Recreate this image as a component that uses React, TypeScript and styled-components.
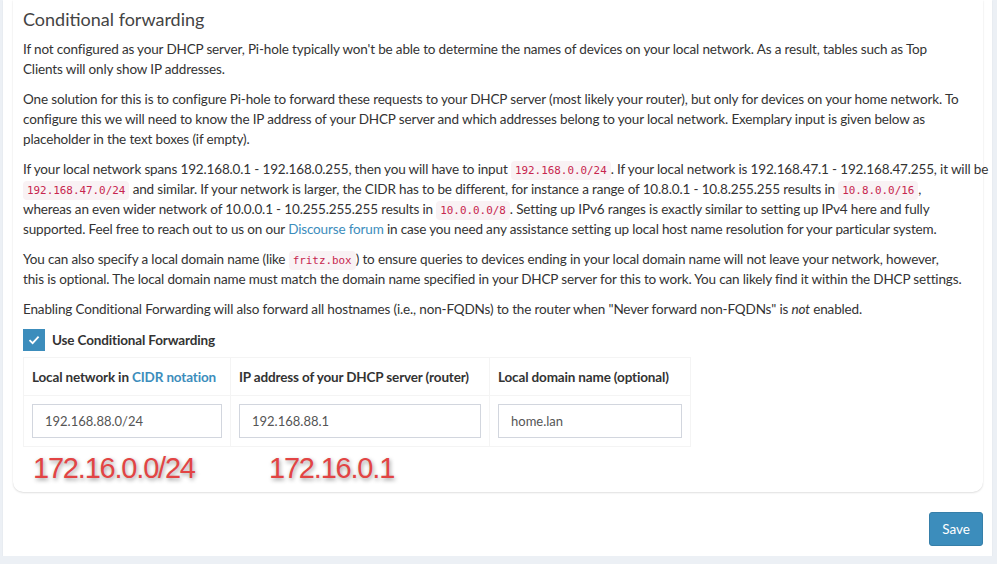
import React from "react";
import styled, { createGlobalStyle } from "styled-components";

const GlobalStyle = createGlobalStyle`
  html, body {
    margin: 0;
    padding: 0;
    background: #ecf0f5;
  }
  body {
    font-family: Lato, "Open Sans", sans-serif;
    font-size: 13.5px;
    letter-spacing: -0.15px;
    color: #333;
  }
`;

const Page = styled.div`
  width: 989px;
  margin-left: 3px;
  background: #fff;
  padding: 0 9px 10px 10px;
  box-sizing: border-box;
  box-shadow: 0 1px 1px rgba(0, 0, 0, 0.1);
`;

const Card = styled.div`
  background: #fff;
  border-radius: 0 0 10px 10px;
  box-shadow: 0 1px 2px rgba(0, 0, 0, 0.12), 0 0 1px rgba(0, 0, 0, 0.08);
  padding: 9px 10px 8px 10px;
`;

const Title = styled.h3`
  margin: 0 0 10px;
  font-size: 18px;
  font-weight: 400;
  line-height: 20px;
  color: #444;
  letter-spacing: 0;
`;

const Para = styled.p`
  margin: 0 0 10px;
  line-height: 20px;
  white-space: nowrap;
`;

const Code = styled.code`
  font-family: "DejaVu Sans Mono", "Liberation Mono", monospace;
  font-size: 10.9px;
  line-height: 1;
  letter-spacing: 0;
  color: #c7254e;
  background: #f9f2f4;
  padding: 3px 4px;
  border-radius: 4px;
`;

const Link = styled.a`
  color: #3c8dbc;
  text-decoration: none;
`;

const CheckRow = styled.label`
  display: flex;
  align-items: center;
  gap: 7px;
  font-weight: 700;
  margin: 0 0 6px;
`;

const Box = styled.span`
  width: 22px;
  height: 22px;
  background: #3c8dbc;
  display: flex;
  align-items: center;
  justify-content: center;
`;

const Table = styled.table`
  border-collapse: collapse;
  border: 1px solid #f4f4f4;
`;

const Th = styled.th<{ $w: number }>`
  width: ${(p) => p.$w}px;
  box-sizing: border-box;
  border: 1px solid #f4f4f4;
  padding: 8px 8px;
  height: 38px;
  text-align: left;
  font-size: 13.5px;
  font-weight: 700;
  white-space: nowrap;
`;

const Td = styled.td`
  border: 1px solid #f4f4f4;
  padding: 8px;
  height: 50px;
  box-sizing: border-box;
`;

const Input = styled.input`
  display: block;
  width: 100%;
  height: 34px;
  box-sizing: border-box;
  border: 1px solid #d2d6de;
  padding: 6px 12px;
  font-family: Lato, "Open Sans", sans-serif;
  font-size: 13px;
  color: #555;
  outline: none;
`;

const Notes = styled.div`
  display: flex;
  padding: 6px 0 0 10px;
  height: 31px;
`;

const Note = styled.span<{ $w: number }>`
  width: ${(p) => p.$w}px;
  font-family: "Liberation Sans", Arial, sans-serif;
  font-size: 29px;
  letter-spacing: -1.2px;
  line-height: 30px;
  color: #e24444;
  text-shadow: 1px 2px 4px rgba(0, 0, 0, 0.4);
`;

const Footer = styled.div`
  display: flex;
  justify-content: flex-end;
  padding-top: 20px;
`;

const SaveButton = styled.button`
  height: 34px;
  padding: 0 12px;
  background: #3c8dbc;
  border: 1px solid #367fa9;
  border-radius: 3px;
  color: #fff;
  font-family: Lato, "Open Sans", sans-serif;
  font-size: 13.5px;
`;

export default function App() {
  return (
    <>
      <GlobalStyle />
      <Page>
        <Card>
          <Title>Conditional forwarding</Title>
          <Para>
            If not configured as your DHCP server, Pi-hole typically won't be able to determine the names of devices on
            your local network. As a result, tables such as Top
            <br />
            Clients will only show IP addresses.
          </Para>
          <Para>
            One solution for this is to configure Pi-hole to forward these requests to your DHCP server (most likely your
            router), but only for devices on your home network. To
            <br />
            configure this we will need to know the IP address of your DHCP server and which addresses belong to your
            local network. Exemplary input is given below as
            <br />
            placeholder in the text boxes (if empty).
          </Para>
          <Para>
            If your local network spans 192.168.0.1 - 192.168.0.255, then you will have to input <Code>192.168.0.0/24</Code>.
            If your local network is 192.168.47.1 - 192.168.47.255, it will be
            <br />
            <Code>192.168.47.0/24</Code> and similar. If your network is larger, the CIDR has to be different, for
            instance a range of 10.8.0.1 - 10.8.255.255 results in <Code>10.8.0.0/16</Code>,
            <br />
            whereas an even wider network of 10.0.0.1 - 10.255.255.255 results in <Code>10.0.0.0/8</Code>. Setting up
            IPv6 ranges is exactly similar to setting up IPv4 here and fully
            <br />
            supported. Feel free to reach out to us on our <Link>Discourse forum</Link> in case you need any assistance
            setting up local host name resolution for your particular system.
          </Para>
          <Para>
            You can also specify a local domain name (like <Code>fritz.box</Code>) to ensure queries to devices ending
            in your local domain name will not leave your network, however,
            <br />
            this is optional. The local domain name must match the domain name specified in your DHCP server for this
            to work. You can likely find it within the DHCP settings.
          </Para>
          <Para>
            Enabling Conditional Forwarding will also forward all hostnames (i.e., non-FQDNs) to the router when "Never
            forward non-FQDNs" is <em>not</em> enabled.
          </Para>
          <CheckRow>
            <Box>
              <svg width="14" height="14" viewBox="0 0 14 14">
                <path d="M2.5 7.2 L5.6 10.2 L11.6 3.6" fill="none" stroke="#fff" strokeWidth="1.8" />
              </svg>
            </Box>
            Use Conditional Forwarding
          </CheckRow>
          <Table>
            <thead>
              <tr>
                <Th $w={207}>
                  Local network in <Link>CIDR notation</Link>
                </Th>
                <Th $w={259}>IP address of your DHCP server (router)</Th>
                <Th $w={201}>Local domain name (optional)</Th>
              </tr>
            </thead>
            <tbody>
              <tr>
                <Td>
                  <Input defaultValue="192.168.88.0/24" />
                </Td>
                <Td>
                  <Input defaultValue="192.168.88.1" />
                </Td>
                <Td>
                  <Input defaultValue="home.lan" />
                </Td>
              </tr>
            </tbody>
          </Table>
          <Notes>
            <Note $w={236}>172.16.0.0/24</Note>
            <Note $w={200}>172.16.0.1</Note>
          </Notes>
        </Card>
        <Footer>
          <SaveButton>Save</SaveButton>
        </Footer>
      </Page>
    </>
  );
}
